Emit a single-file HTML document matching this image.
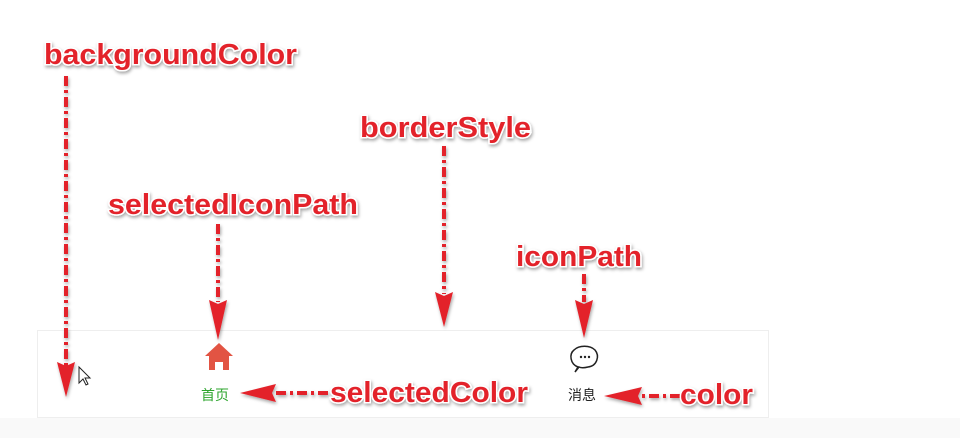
<!DOCTYPE html>
<html><head><meta charset="utf-8">
<style>
html,body{margin:0;padding:0;background:#fff;width:960px;height:438px;overflow:hidden}
.lbl{font-family:"Liberation Sans",sans-serif;font-weight:bold;font-size:29px;fill:#e3242b;stroke:#fff;stroke-width:3px;paint-order:stroke;filter:url(#sh)}
.cn{font-family:"Liberation Sans","Noto Sans CJK SC",sans-serif;font-size:14px}
.ln{stroke:#e3242b;stroke-width:4;stroke-dasharray:10 4 3 4;fill:none}
.hd{fill:#e3242b}
</style></head><body>
<svg width="960" height="438" xmlns="http://www.w3.org/2000/svg">
<defs><filter id="sh" filterUnits="userSpaceOnUse" x="0" y="0" width="960" height="438"><feDropShadow dx="1" dy="2" stdDeviation="1.5" flood-color="#000" flood-opacity="0.35"/></filter></defs>
<rect x="0" y="418" width="960" height="20" fill="#f9f9f9"/>
<rect x="37.5" y="330.5" width="731" height="87" fill="#fff" stroke="#eeeeee"/>
<path d="M219 343 L233 356 L229 356 L229 370 L223 370 L223 362 L215 362 L215 370 L209 370 L209 356 L205 356 Z" fill="#e25443"/>
<text x="201" y="400" class="cn" fill="#2ea52e">首页</text>
<path d="M578 367 C570 364 569 354 574 350 C579 345 590 345 595 350 C600 356 597 366 588 367 C584 368 581 368 579 367 L575 372 Z" fill="none" stroke="#222" stroke-width="1.5"/>
<circle cx="581" cy="357" r="1.2" fill="#222"/><circle cx="585" cy="357" r="1.2" fill="#222"/><circle cx="589" cy="357" r="1.2" fill="#222"/>
<text x="568" y="400" class="cn" fill="#222">消息</text>
<path d="M79 367 L79 383 L83 379 L86 385 L88 384 L85 378 L90 378 Z" fill="#fff" stroke="#222" stroke-width="1"/>
<g filter="url(#sh)">
<line class="ln" x1="66" y1="76" x2="66" y2="366"/>
<path class="hd" d="M57 362 L66 366 L75 362 L66 397 Z"/>
<line class="ln" x1="218" y1="224" x2="218" y2="302"/>
<path class="hd" d="M209 300 L218 304 L227 300 L218 340 Z"/>
<line class="ln" x1="444" y1="146" x2="444" y2="294"/>
<path class="hd" d="M435 292 L444 296 L453 292 L444 327 Z"/>
<line class="ln" x1="584" y1="274" x2="584" y2="302"/>
<path class="hd" d="M575 300 L584 304 L593 300 L584 338 Z"/>
<line class="ln" x1="328" y1="393" x2="274" y2="393"/>
<path class="hd" d="M276 384 L272 393 L276 402 L240 393 Z"/>
<line class="ln" x1="680" y1="396" x2="640" y2="396"/>
<path class="hd" d="M642 387 L638 396 L642 405 L604 396 Z"/>
</g>
<text class="lbl" x="44" y="64" textLength="253" lengthAdjust="spacingAndGlyphs">backgroundColor</text>
<text class="lbl" x="360" y="137" textLength="171" lengthAdjust="spacingAndGlyphs">borderStyle</text>
<text class="lbl" x="108" y="214" textLength="250" lengthAdjust="spacingAndGlyphs">selectedIconPath</text>
<text class="lbl" x="516" y="266" textLength="126" lengthAdjust="spacingAndGlyphs">iconPath</text>
<text class="lbl" x="330" y="402" textLength="198" lengthAdjust="spacingAndGlyphs">selectedColor</text>
<text class="lbl" x="680" y="404" textLength="73" lengthAdjust="spacingAndGlyphs">color</text>
</svg>
</body></html>
